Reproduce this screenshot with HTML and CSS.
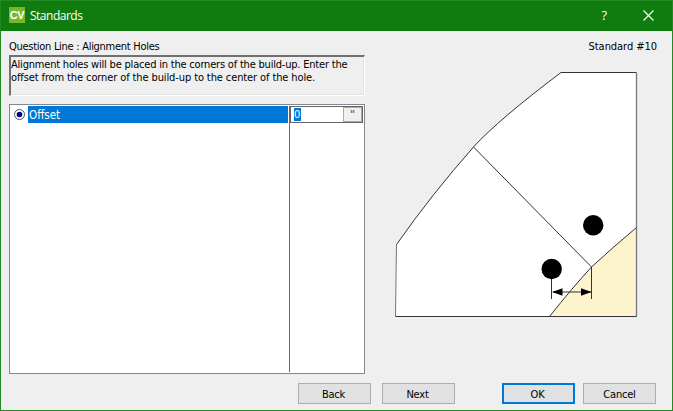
FILE: index.html
```html
<!DOCTYPE html>
<html lang="en">
<head>
<meta charset="utf-8">
<title>Standards</title>
<link rel="stylesheet" href="styles.css">
</head>
<body>
<div class="window">
  <header class="titlebar">
    <span class="logo">CV</span>
    <span class="title">Standards</span>
    <span class="help">?</span>
    <svg class="close" width="11" height="11" viewBox="0 0 11 11"><path d="M.5.5l10 10M10.5.5l-10 10" stroke="#fff" stroke-width="1.1"/></svg>
  </header>
  <main class="content">
    <section class="left">
      <div class="question">Question Line : Alignment Holes</div>
      <div class="description"><span class="line1">Alignment holes will be placed in the corners of the build-up. Enter the</span><br><span class="line2">offset from the corner of the build-up to the center of the hole.</span></div>
      <div class="list">
        <div class="names">
          <div class="row">
            <svg class="radio" width="11" height="11" viewBox="0 0 11 11"><circle cx="5.5" cy="5.5" r="5" fill="#fff" stroke="#555"/><circle cx="5.5" cy="5.5" r="2.8" fill="#000080"/></svg>
            <span class="name">Offset</span>
          </div>
        </div>
        <div class="values">
          <div class="field"><span class="value">0</span><span class="unit">"</span></div>
        </div>
      </div>
    </section>
    <section class="right">
      <div class="standard">Standard #10</div>
      <svg class="diagram" width="250" height="254" viewBox="390 68 250 254">
        <path d="M561 72.5H636.5V316.5H395.5L396.5 244.5Q432 194 473.500 147Q498 120 561 72.500Z" fill="#fff"/>
        <path d="M636.500 227.500Q612 248 591.500 267Q573 287 549.500 316.500H636.500Z" fill="#fdf3cd"/>
        <g fill="none" stroke="#333" stroke-width="1">
          <path d="M561 72.500H636.500"/>
          <path d="M636.500 72.500V316.500" stroke="#777" stroke-width="1.300"/>
          <path d="M636.500 316.500H395.500"/>
          <path d="M395.500 316.500L396.500 244.500" stroke="#777"/>
          <path d="M396.500 244.500Q432 194 473.500 147Q498 120 561 72.500"/>
          <path d="M473.500 147L591.500 267"/>
          <path d="M636.500 227.500Q612 248 591.500 267Q573 287 549.500 316.500"/>
          <path d="M591.500 267V299M551.500 279V299M553 292H591"/>
        </g>
        <circle cx="593.200" cy="225.300" r="10.200"/>
        <circle cx="551.700" cy="269" r="10.200"/>
        <path d="M552 292l10.500-3.800v7.600zM591.500 292l-10.500-3.800v7.600z"/>
      </svg>
    </section>
  </main>
  <footer class="actions">
    <button class="back">Back</button>
    <button class="next">Next</button>
    <button class="ok">OK</button>
    <button class="cancel">Cancel</button>
  </footer>
</div>
</body>
</html>
```
FILE: styles.css
```css
* { box-sizing: border-box; }
body {
  margin: 0;
  font: 11px/13px "DejaVu Sans Condensed", "DejaVu Sans", sans-serif;
  font-stretch: condensed;
  color: #000;
}
.window {
  width: 673px;
  height: 411px;
  border: 1px solid #238a23;
  background: #efefef;
  display: flex;
  flex-direction: column;
}
.titlebar {
  height: 30px;
  flex: none;
  background: #107c10;
  color: #fff;
  display: flex;
  align-items: center;
  padding: 0 18px 2px 8px;
}
.logo {
  width: 16px;
  height: 16px;
  background: #76b82a;
  font: bold 11px/16px "Liberation Sans", sans-serif;
  text-align: center;
  letter-spacing: -0.5px;
}
.title { margin: 1px 0 0 5px; font: 12px/16px "Open Sans", sans-serif; letter-spacing: -0.5px; }
.help { margin-left: auto; font: 13px/16px "Open Sans", sans-serif; }
.close { margin-left: 36px; }
.content { flex: 1; display: flex; padding: 9px 15px 0 8px; }
.left { width: 356px; }
.question { height: 15px; white-space: nowrap; letter-spacing: -0.28px; }
.description {
  height: 41px;
  border: 1px solid #fff;
  border-top: 2px solid #707070;
  border-left: 2px solid #707070;
  box-shadow: inset -1px -1px #e3e3e3;
  padding: 1px 0 0;
  white-space: nowrap;
}
.line1 { letter-spacing: -0.2px; }
.line2 { letter-spacing: -0.11px; }
.list {
  height: 270px;
  margin-top: 8px;
  border: 1px solid #828790;
  background: #fff;
  display: flex;
}
.names { width: 279px; padding: 1px 1px 0 0; }
.row { height: 17px; display: flex; align-items: center; }
.radio { margin: 0 3px 0 4px; }
.name {
  flex: 1;
  height: 17px;
  line-height: 18px;
  padding-left: 1px;
  background: #0078d7;
  color: #fff;
  font-size: 11.5px;
}
.values { flex: 1; height: 266px; margin: 1px 1px 0 0; border-left: 1px solid #646464; }
.field {
  height: 17px;
  border: 1px solid #646464;
  border-left: 0;
  box-shadow: inset 1px 0 #646464;
  display: flex;
  align-items: center;
  padding-left: 4px;
}
.value { width: 7px; height: 13px; background: #0078d7; color: #fff; }
.unit {
  width: 19px;
  height: 15px;
  margin-left: auto;
  background: #f0f0f0;
  border: 1px solid #aaa;
  text-align: center;
  color: #a65b25;
  font-weight: bold;
}
.right { flex: 1; display: flex; flex-direction: column; }
.standard { height: 13px; text-align: right; white-space: nowrap; letter-spacing: -0.05px; }
.diagram { margin: 15px 0 0 25px; }
.actions {
  height: 27px;
  flex: none;
  display: flex;
  align-items: flex-start;
  padding-left: 297px;
}
button {
  width: 73px;
  height: 21px;
  padding: 1px 0 0;
  border: 1px solid #adadad;
  background: #e1e1e1;
  font: inherit;
  letter-spacing: -0.2px;
  color: #000;
}
.back, .next { padding-right: 2px; }
.next { margin-left: 11px; }
.ok { margin-left: 47px; border: 2px solid #0078d7; padding-right: 2px; }
.cancel { margin-left: 8px; }
```
